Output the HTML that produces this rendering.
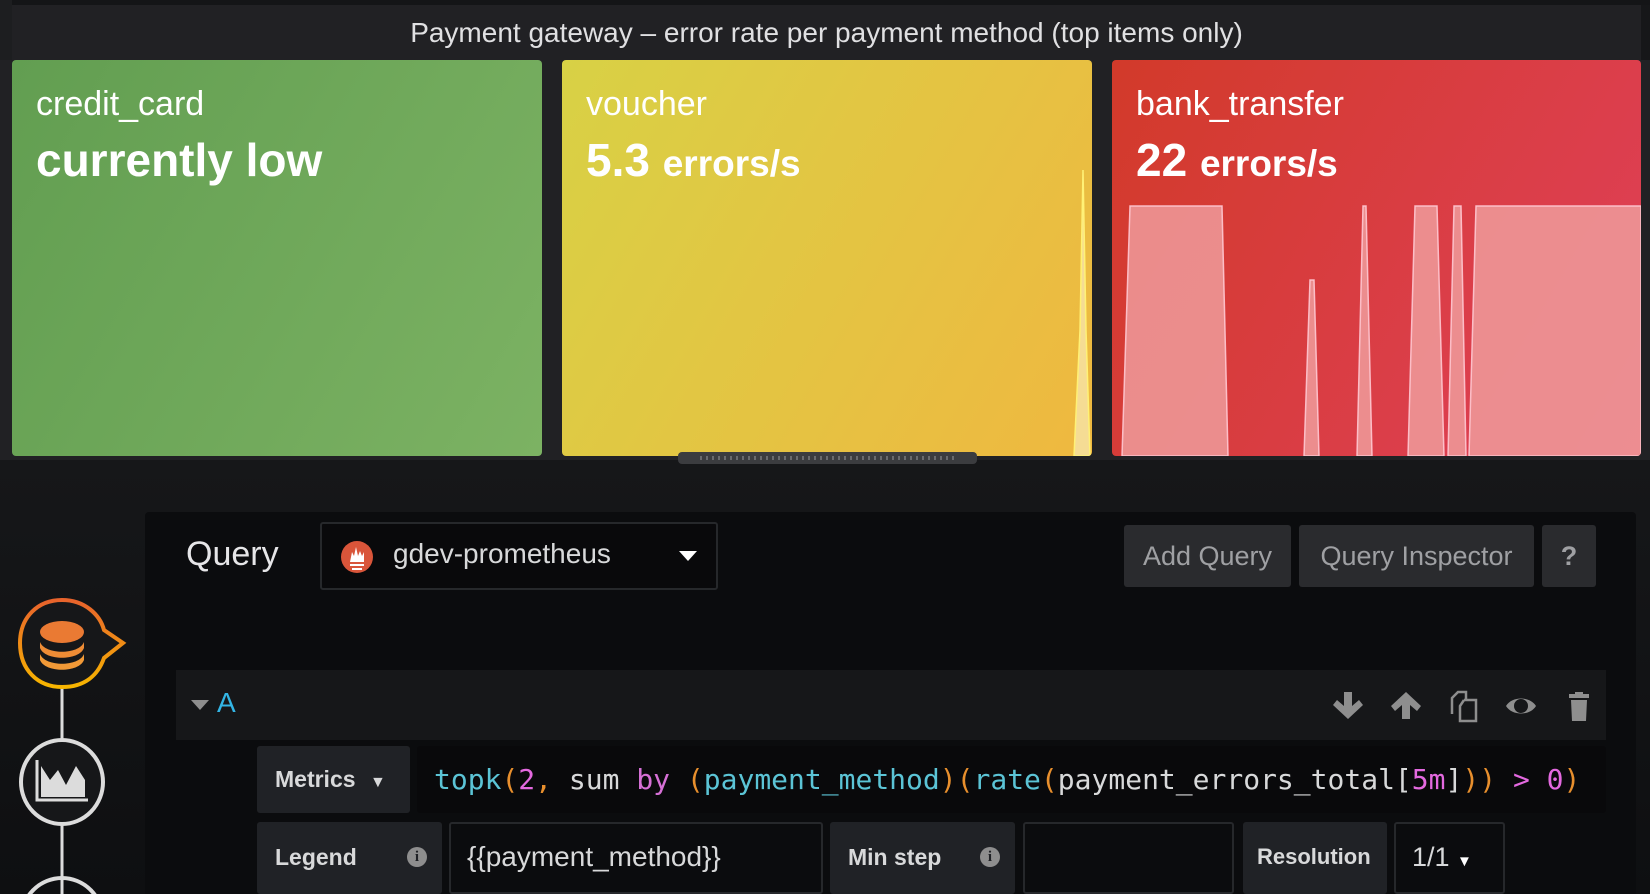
<!DOCTYPE html>
<html><head><meta charset="utf-8"><style>
*{margin:0;padding:0;box-sizing:border-box}
html,body{width:1650px;height:894px;overflow:hidden}
body{background:#161719;font-family:"Liberation Sans",sans-serif;position:relative}
.abs{position:absolute}
.title{left:12px;top:5px;width:1629px;height:55px;background:#212124;color:#e0e0e2;font-size:28px;text-align:center;line-height:56px}
.p{top:60px;height:396px;border-radius:4px;overflow:hidden;color:#fff}
.p .n{position:absolute;left:24px;top:24px;font-size:34px;line-height:40px}
.p .v{position:absolute;left:24px;top:70px;font-size:46px;line-height:60px;font-weight:bold}
.p .v small{font-size:37px}
.btn{background:#2a2b2e;border-radius:3px;color:#9fa0a3;font-size:27px;text-align:center;line-height:62px;top:525px;height:62px}
.lbl{background:#202226;color:#d8d9da;font-size:23px;font-weight:bold;border-radius:3px;padding-left:18px;line-height:70px}
.inp{background:#0b0c0e;border:2px solid #26282b;border-radius:3px;color:#d8d9da;font-size:28px;padding-left:16px;line-height:66px}
.info{position:absolute;width:20px;height:20px;border-radius:50%;background:#8e8e8e;color:#202226;font-size:15px;line-height:20px;text-align:center;font-weight:bold;font-family:"Liberation Serif",serif}
</style></head><body>
<div class="abs" style="left:0;top:0;width:1650px;height:5px;background:#141517"></div>
<div class="abs" style="left:0;top:0;width:12px;height:460px;background:#1d1e20"></div>
<div class="abs title">Payment gateway – error rate per payment method (top items only)</div>
<div class="abs" style="left:0;top:60px;width:1650px;height:400px;background:#212124"></div>

<div class="abs p" style="left:12px;width:530px;background:linear-gradient(120deg,#629e51,#7cb263)">
<div class="n">credit_card</div><div class="v">currently low</div></div>

<div class="abs p" style="left:562px;width:530px;background:linear-gradient(120deg,#d8d145,#efb840)">
<div class="n">voucher</div><div class="v">5.3 <small>errors/s</small></div>
<svg class="abs" style="left:0;top:0" width="530" height="396"><path d="M512,396 L518,270 L521,110 L524,270 L528,396Z" fill="#f5dc94" stroke="#fff176" stroke-width="1.5"/></svg></div>

<div class="abs p" style="left:1112px;width:529px;background:linear-gradient(120deg,#d23a2a,#e0405a)">
<div class="n">bank_transfer</div><div class="v">22 <small>errors/s</small></div>
<svg class="abs" style="left:0;top:0" width="529" height="396">
<g fill="rgba(238,155,155,0.85)" stroke="rgba(255,200,210,0.9)" stroke-width="1.5">
<path d="M10,396 L18,146 L110,146 L116,396Z"/>
<path d="M192,396 L198,220 L202,220 L207,396Z"/>
<path d="M245,396 L251,146 L254,146 L260,396Z"/>
<path d="M296,396 L303,146 L325,146 L332,396Z"/>
<path d="M336,396 L342,146 L349,146 L354,396Z"/>
<path d="M357,396 L364,146 L529,146 L529,396Z"/>
</g></svg></div>

<div class="abs" style="left:678px;top:452px;width:299px;height:12px;border-radius:4px;background:#3b3c3f"></div>
<div class="abs" style="left:700px;top:456px;width:255px;height:4px;background:repeating-linear-gradient(90deg,#6a6b6e 0 2px,transparent 2px 6px)"></div>

<div class="abs" style="left:0;top:464px;width:1650px;height:430px;background:linear-gradient(#161719,#0e0f11)"></div>
<div class="abs" style="left:145px;top:512px;width:1491px;height:382px;background:#0b0c0e;border-radius:4px 4px 0 0"></div>

<div class="abs" style="left:186px;top:535px;color:#e6e6e8;font-size:34px">Query</div>
<div class="abs" style="left:320px;top:522px;width:398px;height:68px;border:2px solid #26282b;border-radius:3px;background:#09090b"></div>
<svg class="abs" style="left:340px;top:540px" width="34" height="34"><circle cx="17" cy="17" r="16" fill="#d9553a"/><path d="M10,22 L12,12 L14,16 L16,7 L18,16 L20,11 L22,16 L24,12 L24,22Z" fill="#fff"/><rect x="10" y="24" width="14" height="2" fill="#fff"/><rect x="12" y="28" width="10" height="2" fill="#fff"/></svg>
<div class="abs" style="left:393px;top:538px;color:#d8d9da;font-size:28px">gdev-prometheus</div>
<svg class="abs" style="left:679px;top:551px" width="18" height="12"><path d="M0,0 L18,0 L9,10Z" fill="#fff"/></svg>

<div class="abs btn" style="left:1124px;width:167px">Add Query</div>
<div class="abs btn" style="left:1299px;width:235px">Query Inspector</div>
<div class="abs btn" style="left:1542px;width:54px;font-weight:bold">?</div>

<svg class="abs" style="left:0;top:590px" width="140" height="304">
<defs><linearGradient id="g" x1="0" y1="0" x2="0" y2="1"><stop offset="0" stop-color="#e8632c"/><stop offset="1" stop-color="#f7b500"/></linearGradient></defs>
<line x1="62" y1="96" x2="62" y2="304" stroke="#dcdcdc" stroke-width="3"/>
<path d="M62,10 C85,10 100,25 104,40 L123,53 L104,68 C98,85 85,97 62,97 C38,97 20,80 20,53 C20,27 38,10 62,10Z" fill="#161719" stroke="url(#g)" stroke-width="4"/>
<ellipse cx="62" cy="42" rx="22" ry="11" fill="#ea7a33"/>
<path d="M40,52 C45,65 79,65 84,52 L84,58 C79,71 45,71 40,58Z" fill="#ee8c35"/>
<path d="M40,64 C45,77 79,77 84,64 L84,70 C79,83 45,83 40,70Z" fill="#f29a37"/>
<ellipse cx="62" cy="192" rx="41" ry="42" fill="#161719" stroke="#dcdcdc" stroke-width="4"/>
<path d="M37,170 L37,210 L88,210" fill="none" stroke="#dcdcdc" stroke-width="3"/>
<path d="M41,207 L41,176 L50,190 L58,180 L66,195 L76,176 L85,190 L85,207Z" fill="#dcdcdc"/>
<ellipse cx="62" cy="330" rx="41" ry="42" fill="none" stroke="#dcdcdc" stroke-width="4"/>
</svg>

<div class="abs" style="left:176px;top:670px;width:1430px;height:70px;background:#161719"></div>
<svg class="abs" style="left:191px;top:700px" width="18" height="12"><path d="M0,0 L18,0 L9,10Z" fill="#8e8e8e"/></svg>
<div class="abs" style="left:217px;top:687px;color:#33b5e5;font-size:28px">A</div>
<svg class="abs" style="left:1330px;top:688px" width="270" height="36" fill="#8e8e8e">
<path d="M14,4 L22,4 L22,18 L29,12 L33,17 L18,31 L3,17 L7,12 L14,18Z"/>
<path d="M72,31 L80,31 L80,17 L87,23 L91,18 L76,4 L61,18 L65,23 L72,17Z"/>
<g fill="none" stroke="#8e8e8e" stroke-width="2.5"><path d="M122,26 L122,10 L128,4 L136,4 L136,12 M134,12 L146,12 L146,33 L130,33 L130,18 L134,12"/></g>
<path d="M176,18 C182,8 200,8 206,18 C200,28 182,28 176,18Z M191,11 A7,7 0 1 0 191,25 A7,7 0 1 0 191,11Z" fill-rule="evenodd"/>
<path d="M239,6 L245,6 L245,4 L253,4 L253,6 L259,6 L259,10 L239,10Z M241,12 L257,12 L256,33 L242,33Z"/>
</svg>

<div class="abs lbl" style="left:257px;top:746px;width:153px;height:67px;line-height:67px">Metrics <span style="font-size:16px;margin-left:8px">▼</span></div>
<div class="abs" style="left:417px;top:746px;width:1189px;height:67px;background:#09090b;border-radius:3px;font-family:'DejaVu Sans Mono','Liberation Mono',monospace;font-size:28px;line-height:67px;padding-left:17px;color:#d8d9da;white-space:pre"><span style="color:#5bc4d6">topk</span><span style="color:#e88f2d">(</span><span style="color:#e469e0">2</span><span style="color:#e88f2d">,</span> sum <span style="color:#d670d6">by</span> <span style="color:#e88f2d">(</span><span style="color:#5bc4d6">payment_method</span><span style="color:#e88f2d">)(</span><span style="color:#5bc4d6">rate</span><span style="color:#e88f2d">(</span>payment_errors_total[<span style="color:#e469e0">5m</span>]<span style="color:#e88f2d">))</span> <span style="color:#e469e0">&gt;</span> <span style="color:#e469e0">0</span><span style="color:#e88f2d">)</span></div>

<div class="abs lbl" style="left:257px;top:822px;width:185px;height:72px">Legend</div>
<div class="info" style="left:407px;top:847px">i</div>
<div class="abs inp" style="left:449px;top:822px;width:374px;height:72px">{{payment_method}}</div>
<div class="abs lbl" style="left:830px;top:822px;width:185px;height:72px">Min step</div>
<div class="info" style="left:980px;top:847px">i</div>
<div class="abs inp" style="left:1023px;top:822px;width:211px;height:72px"></div>
<div class="abs lbl" style="left:1243px;top:822px;width:144px;height:72px;padding-left:14px;font-size:22px">Resolution</div>
<div class="abs inp" style="left:1394px;top:822px;width:111px;height:72px;font-size:27px">1/1 <span style="font-size:15px;color:#fff">▼</span></div>
</body></html>
